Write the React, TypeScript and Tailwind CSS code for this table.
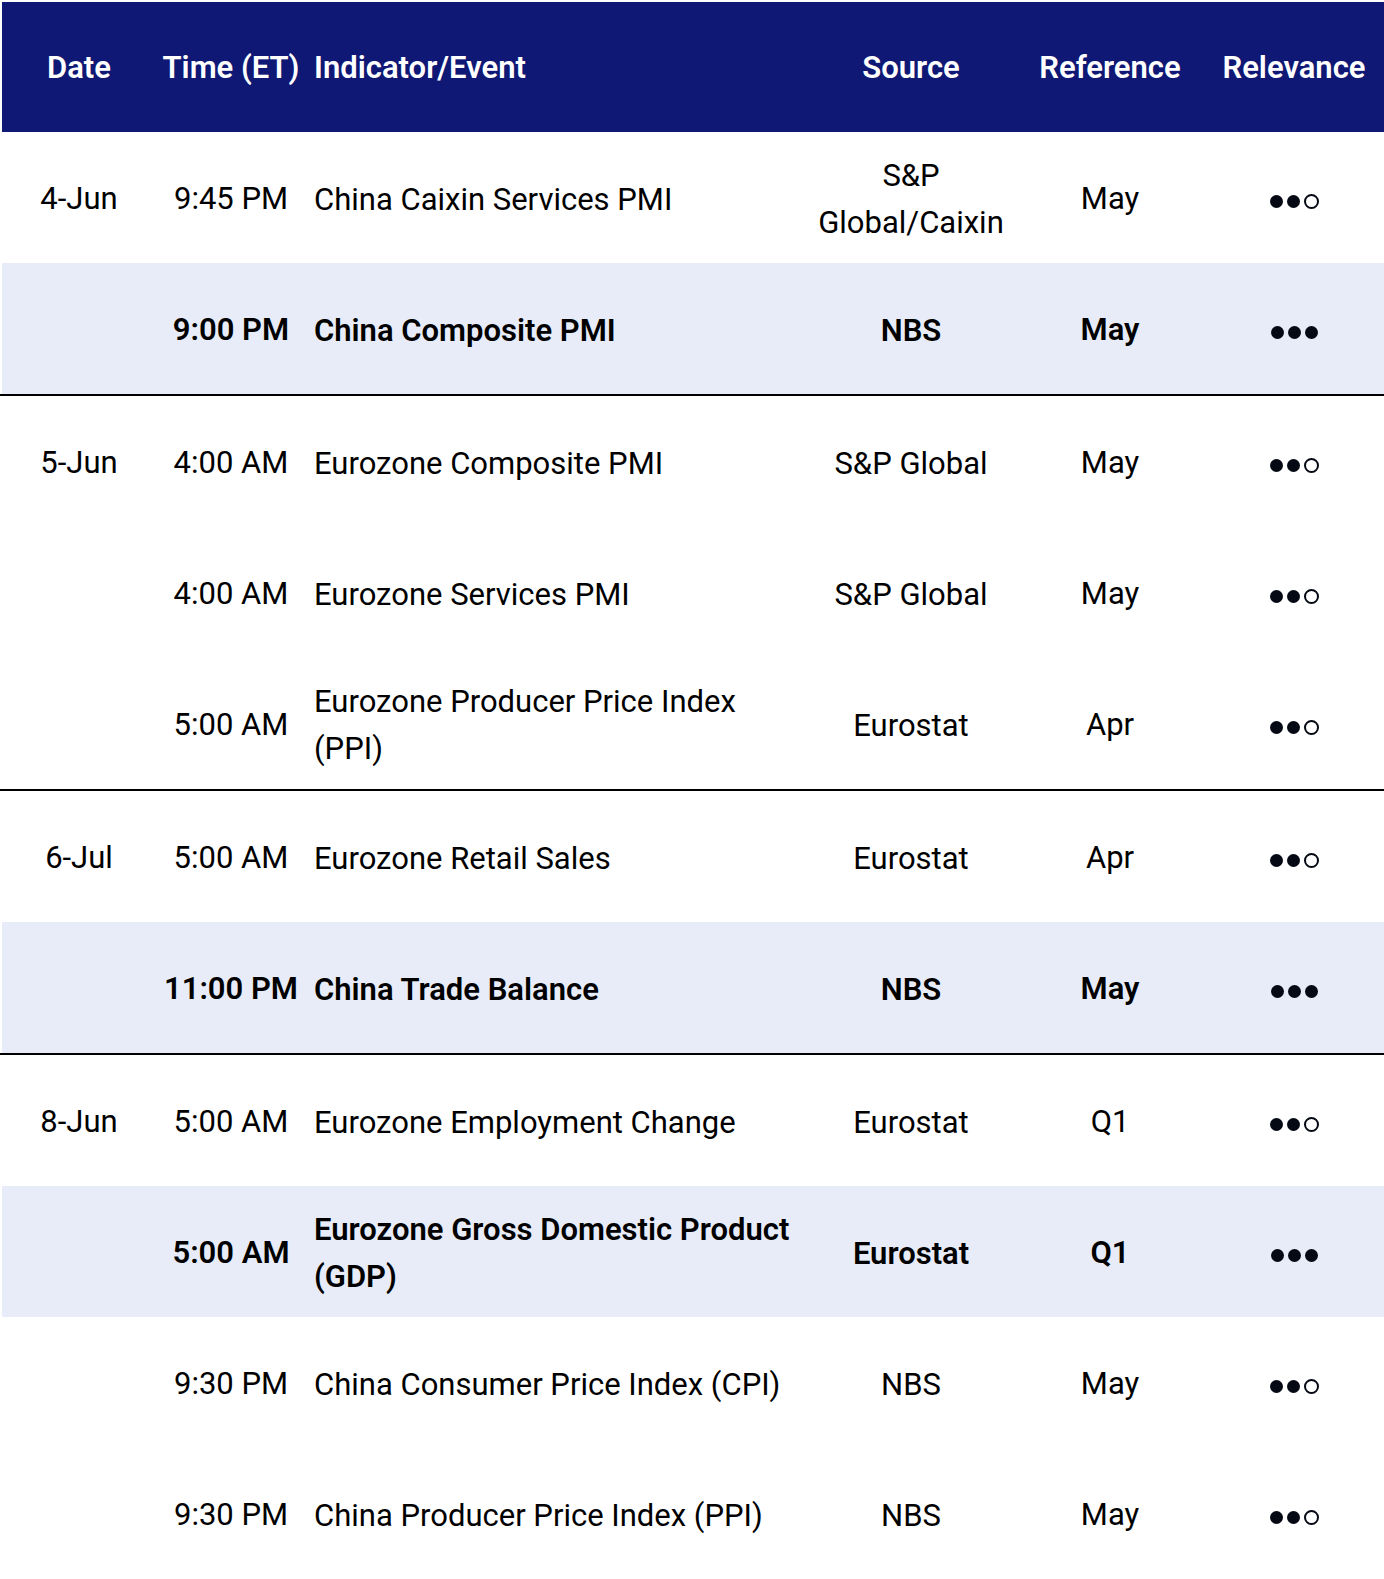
import React from 'react'

type Row = {
  date?: string
  time: string
  event: string[]
  source: string[]
  ref: string
  level: 2 | 3
  key?: boolean
}

// 每组之间有黑色分隔线
const groups: Row[][] = [
  [
    { date: '4-Jun', time: '9:45 PM', event: ['China Caixin Services PMI'], source: ['S&P', 'Global/Caixin'], ref: 'May', level: 2 },
    { time: '9:00 PM', event: ['China Composite PMI'], source: ['NBS'], ref: 'May', level: 3, key: true },
  ],
  [
    { date: '5-Jun', time: '4:00 AM', event: ['Eurozone Composite PMI'], source: ['S&P Global'], ref: 'May', level: 2 },
    { time: '4:00 AM', event: ['Eurozone Services PMI'], source: ['S&P Global'], ref: 'May', level: 2 },
    { time: '5:00 AM', event: ['Eurozone Producer Price Index', '(PPI)'], source: ['Eurostat'], ref: 'Apr', level: 2 },
  ],
  [
    { date: '6-Jul', time: '5:00 AM', event: ['Eurozone Retail Sales'], source: ['Eurostat'], ref: 'Apr', level: 2 },
    { time: '11:00 PM', event: ['China Trade Balance'], source: ['NBS'], ref: 'May', level: 3, key: true },
  ],
  [
    { date: '8-Jun', time: '5:00 AM', event: ['Eurozone Employment Change'], source: ['Eurostat'], ref: 'Q1', level: 2 },
    { time: '5:00 AM', event: ['Eurozone Gross Domestic Product', '(GDP)'], source: ['Eurostat'], ref: 'Q1', level: 3, key: true },
    { time: '9:30 PM', event: ['China Consumer Price Index (CPI)'], source: ['NBS'], ref: 'May', level: 2 },
    { time: '9:30 PM', event: ['China Producer Price Index (PPI)'], source: ['NBS'], ref: 'May', level: 2 },
  ],
]

const cols = 'grid grid-cols-[154px_150px_500px_210px_188px_180px]'

function Dots({ level }: { level: 2 | 3 }) {
  return (
    <div className="flex items-center gap-[4px] mt-[5px]">
      <span className="w-[13px] h-[13px] rounded-full bg-[#050914]" />
      <span className="w-[13px] h-[13px] rounded-full bg-[#050914]" />
      {level === 3 ? (
        <span className="w-[13px] h-[13px] rounded-full bg-[#050914]" />
      ) : (
        <span className="w-[15px] h-[15px] rounded-full border-2 border-[#050914]" />
      )}
    </div>
  )
}

function Lines({ lines }: { lines: string[] }) {
  return (
    <div className="leading-[47px]">
      {lines.map((l) => (
        <div key={l} className="whitespace-nowrap">{l}</div>
      ))}
    </div>
  )
}

export default function App() {
  return (
    <div
      className="w-[1384px] bg-white pt-[2px] text-[31px] text-black"
      style={{ fontFamily: 'Roboto, "Liberation Sans", sans-serif' }}
    >
      {/* Header */}
      <div className={`${cols} ml-[2px] h-[130px] pt-[2px] bg-[#0f1874] text-white font-semibold items-center`}>
        <div className="text-center">Date</div>
        <div className="text-center whitespace-nowrap">Time (ET)</div>
        <div className="pl-[8px]">Indicator/Event</div>
        <div className="text-center">Source</div>
        <div className="text-center">Reference</div>
        <div className="text-center">Relevance</div>
      </div>

      {groups.map((g, gi) => (
        <div key={gi} className={gi < groups.length - 1 ? 'border-b-2 border-black' : ''}>
          {g.map((r, ri) => (
            <div
              key={ri}
              className={`${cols} ml-[2px] h-[131px] pt-[3px] items-center ${r.key ? 'bg-[#e7ecf8] font-semibold' : ''}`}
            >
              <div className="text-center">{r.date}</div>
              <div className="text-center whitespace-nowrap">{r.time}</div>
              <div className="pl-[8px]"><Lines lines={r.event} /></div>
              <div className="text-center"><Lines lines={r.source} /></div>
              <div className="text-center">{r.ref}</div>
              <div className="flex justify-center"><Dots level={r.level} /></div>
            </div>
          ))}
        </div>
      ))}
    </div>
  )
}
